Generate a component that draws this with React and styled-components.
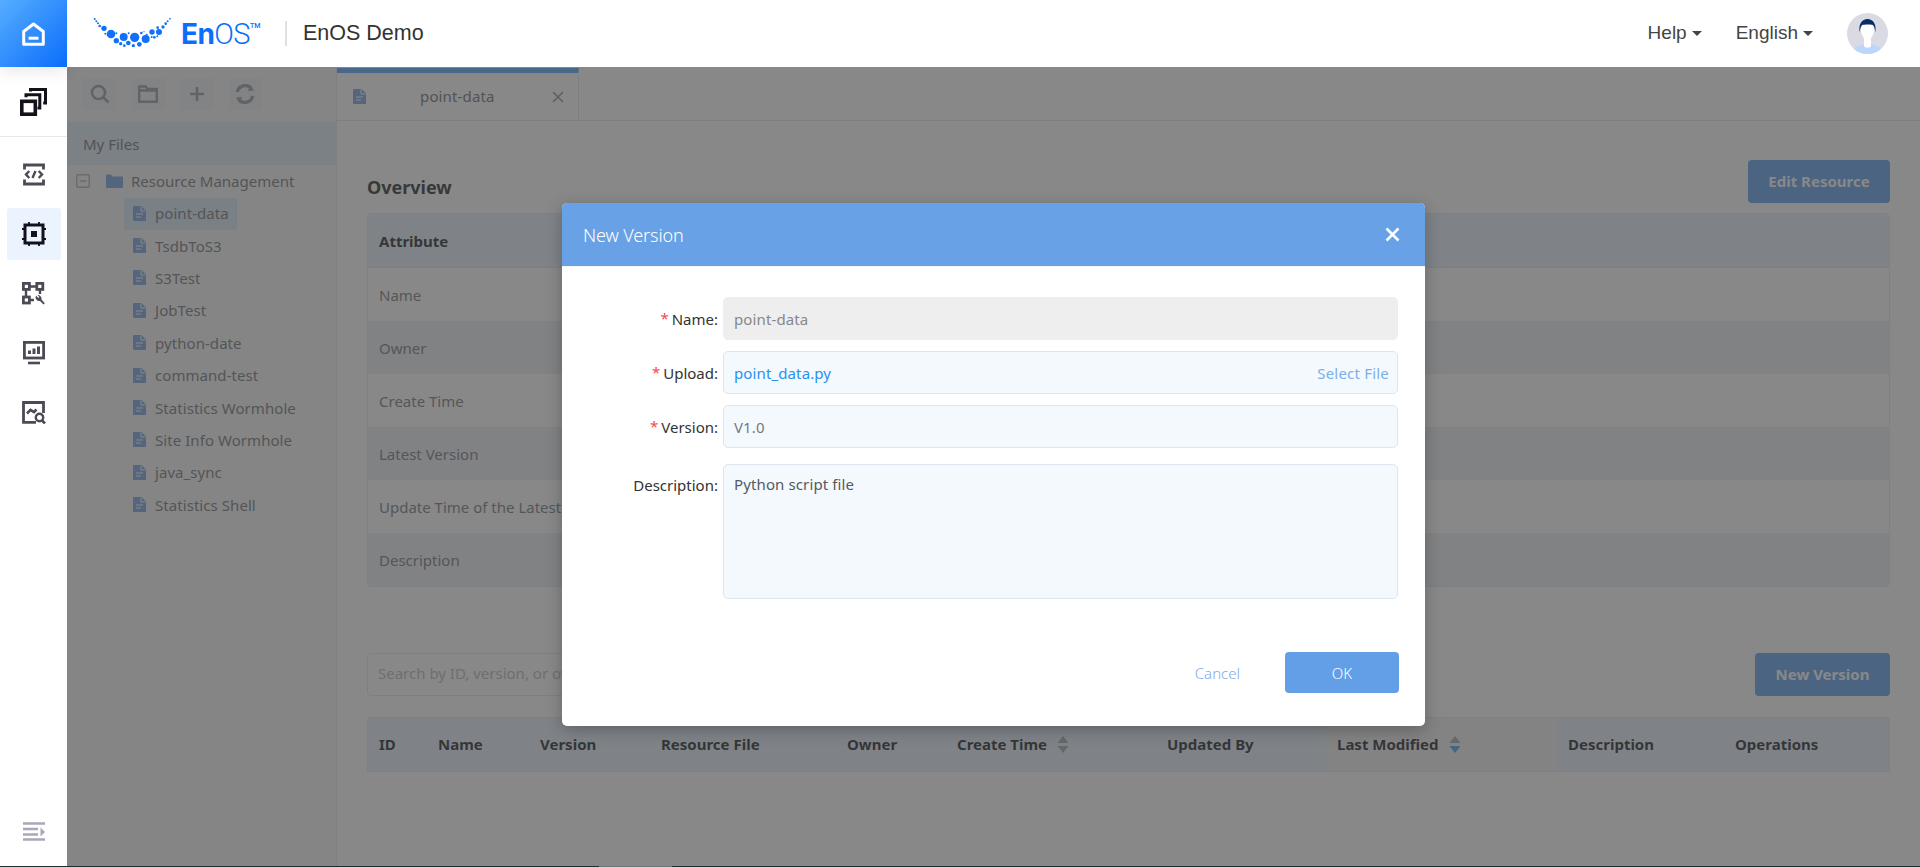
import React from 'react';
import styled, { createGlobalStyle } from 'styled-components';

const Global = createGlobalStyle`
  html, body { margin: 0; padding: 0; height: 100%; background: #fff; overflow: hidden; }
  #root { height: 100%; }
  * { box-sizing: border-box; }
  body { font-family: "Noto Sans", "Open Sans", sans-serif; }
`;

const Root = styled.div`display: flex; height: 867px; width: 1920px; position: relative; border-bottom: 1px solid #1e2d33;`;
const BottomMark = styled.i`position: absolute; left: 599px; bottom: -1px; width: 73px; height: 1px; background: #6d777b; z-index: 4;`;
const Sidebar = styled.aside`width: 67px; flex: none; display: flex; flex-direction: column; align-items: center; background: #fff; position: relative; z-index: 3;`;
const HomeBlock = styled.div`width: 67px; height: 67px; flex: none; display: flex; align-items: center; justify-content: center; background: linear-gradient(135deg, #56adff 0%, #0a6dfa 100%); box-shadow: 0 6px 14px rgba(0,0,0,.08);`;
const LayerItem = styled.div`width: 67px; height: 70px; flex: none; display: flex; align-items: center; justify-content: center; border-bottom: 1px solid #e8e8e8;`;
const NavList = styled.nav`display: flex; flex-direction: column; align-items: center; gap: 7.4px; padding-top: 11.5px; flex: 1;`;
const NavItem = styled.div`width: 54px; height: 52px; display: flex; align-items: center; justify-content: center; border-radius: 3px; background: ${p => p.$active ? '#ebf3ff' : 'transparent'};`;
const CollapseItem = styled.div`height: 70px; display: flex; align-items: center; justify-content: center;`;

const Main = styled.div`flex: 1; min-width: 0; display: flex; flex-direction: column;`;
const Header = styled.header`height: 67px; flex: none; display: flex; align-items: center; background: #fff; padding: 0 32px 0 26px; position: relative; z-index: 3; font-family: "Liberation Sans", Arial, sans-serif;`;
const LogoMark = styled.svg`width: 79px; height: 30px; flex: none; margin-top: -3px;`;
const LogoWord = styled.div`margin-left: 9px; width: 104px; color: #0b6ffb; font-family: Roboto, sans-serif; font-size: 29px; line-height: 30px; letter-spacing: -.6px; font-weight: 300;`;
const LogoBold = styled.span`font-weight: 700; font-family: Inter, Roboto, sans-serif; font-size: 28px;`;
const LogoTm = styled.sup`font-size: 7px; font-weight: 500; vertical-align: 16px; line-height: 0; letter-spacing: 0;`;
const LogoDivider = styled.div`width: 2px; height: 25px; background: #e0e0e0;`;
const AppName = styled.div`margin-left: 16px; font-size: 21.5px; color: #333;`;
const HeaderRight = styled.div`margin-left: auto; display: flex; align-items: center; gap: 34px;`;
const Menu = styled.div`display: flex; align-items: center; gap: 5px; font-size: 19px; color: #444; padding-bottom: 2px;`;
const Caret = styled.i`width: 0; height: 0; border: 5.5px solid transparent; border-top: 5.5px solid #444; border-bottom: 0; display: block; margin-top: 2px;`;
const Avatar = styled.svg`width: 41px; height: 41px; display: block;`;

const Content = styled.div`flex: 1; min-height: 0; display: flex; position: relative; background: #fff;`;
const Tree = styled.section`width: 270px; flex: none; background: #f5f6f8; border-right: 1px solid #e3e6ea; display: flex; flex-direction: column;`;
const ToolBar = styled.div`display: flex; gap: 15.6px; padding: 11px 0 0 16px; height: 55px;`;
const ToolBtn = styled.div`width: 33px; height: 32px; background: #ecf1f6; border-radius: 2px; display: flex; align-items: center; justify-content: center;`;
const MyFiles = styled.div`height: 43px; display: flex; align-items: center; padding-left: 16px; background: #dceaf8; font-size: 15px; color: #666c72;`;
const RootNode = styled.div`display: flex; align-items: center; height: 33px; padding: 0 0 2px 9px; font-size: 15px; color: #6c7074;`;
const FolderSvg = styled.svg`margin: 0 8px 0 16px; display: block;`;
const FileList = styled.ul`list-style: none; margin: 0; padding: 0 0 0 57px; display: flex; flex-direction: column;`;
const FileRow = styled.li`display: flex; align-items: center; gap: 9px; height: 32.4px; padding: 0 0 2px 9px; width: ${p => p.$active ? '113px' : 'auto'}; border-radius: 2px; font-size: 15px; letter-spacing: .06px; color: #6c7074; background: ${p => p.$active ? '#d5e7f8' : 'transparent'};`;

const Work = styled.section`flex: 1; min-width: 0; display: flex; flex-direction: column;`;
const TabBar = styled.div`height: 54px; flex: none; border-bottom: 1px solid #dfe3e8; display: flex; padding-top: 1px;`;
const Tab = styled.div`width: 242px; border-top: 5px solid #4fa3ff; border-right: 1px solid #dfe3e8; display: flex; align-items: center; padding: 0 14px 0 16px; font-size: 15px; letter-spacing: .15px; color: #666a70;`;
const TabLabel = styled.span`margin-left: 54px; flex: 1; padding-bottom: 1px;`;
const TabClose = styled.svg`display: block;`;
const Body = styled.div`flex: 1; padding: 39px 30px 0; display: flex; flex-direction: column;`;
const SectionHead = styled.div`height: 43px; display: flex; align-items: center; justify-content: space-between; margin-bottom: 10px;`;
const SectionTitle = styled.h2`margin: 10px 0 0; font-size: 18px; font-weight: 700; color: #1b1f24;`;
const PrimaryBtn = styled.button`height: 43px; width: ${p => p.$w}px; padding: 0 0 2px; border: 0; border-radius: 4px; background: #549aeb; color: #fff; font: 700 15px "Noto Sans", sans-serif;`;
const InfoTable = styled.div`border: 1px solid #e6e9ee; border-radius: 4px; overflow: hidden;`;
const InfoHead = styled.div`height: 54px; display: flex; align-items: center; padding-left: 11px; background: #e6f1fb; font-size: 15px; font-weight: 700; color: #16191d; border-bottom: 1px solid #dde3ea;`;
const InfoRow = styled.div`height: 53px; display: flex; align-items: center; padding-left: 11px; font-size: 15px; color: #6f7378; background: ${p => p.$alt ? '#eceef4' : '#fff'}; white-space: nowrap;`;
const SearchRow = styled.div`height: 43px; margin-top: 66px; display: flex; justify-content: space-between;`;
const SearchBox = styled.div`width: 420px; height: 43px; border: 1px solid #dfe6ee; border-radius: 4px; display: flex; align-items: center; padding: 0 0 3px 10px; font-size: 15px; color: #b3b7bc; background: #fff;`;
const ListHead = styled.div`margin-top: 21px; height: 55px; display: grid; grid-template-columns: 59px 102px 121px 186px 110px 210px 170px 231px 167px 1fr; border: 1px solid #dfe5ec; border-radius: 4px 4px 0 0; background: #e6f1fb; font-size: 15px; font-weight: 700; color: #16191d; overflow: hidden;`;
const ListCell = styled.div`display: flex; align-items: center; padding: 0 0 2px 11px; gap: 10px; background: ${p => p.$sorted ? '#f0f0f2' : 'transparent'};`;
const SortIcon = styled.svg`display: block; margin-top: 2px;`;

const Overlay = styled.div`position: absolute; inset: 0; z-index: 2; background: rgba(70,70,70,.643); display: flex; justify-content: center; align-items: flex-start; padding-top: 136px;`;
const Modal = styled.div`width: 863px; height: 523px; background: #fff; border-radius: 5px; overflow: hidden; display: flex; flex-direction: column; box-shadow: 0 4px 16px rgba(0,0,0,.25);`;
const ModalHead = styled.div`height: 64px; flex: none; background: #68a1e5; display: flex; align-items: center; justify-content: space-between; padding: 0 25px 0 21px; color: #fff; font-size: 18px; font-weight: 300; letter-spacing: -.1px; border-bottom: 1px solid #f2f6fc;`;
const CloseIcon = styled.svg`display: block;`;
const Form = styled.div`padding: 30px 27px 0 0; display: grid; grid-template-columns: 156px 675px; column-gap: 5px; grid-template-rows: 43px 43px 43px 135px; row-gap: 11px;`;
const Label = styled.div`display: flex; align-items: ${p => p.$top ? 'flex-start' : 'center'}; justify-content: flex-end; font-size: 15px; color: #333; gap: 3px; padding-top: ${p => p.$top ? '11px' : '0'}; margin-top: ${p => p.$top ? '5px' : '0'};`;
const Req = styled.span`color: #f5484f; font-size: 15px; line-height: 1; margin-top: -1px;`;
const Field = styled.div`display: flex; align-items: center; justify-content: space-between; padding: ${p => p.$link ? '1px' : '0'} 8px 0 ${p => p.$pl || 10}px; border-radius: 5px; font-size: 15px; letter-spacing: .12px; background: ${p => p.$disabled ? '#eeeeee' : '#f4f9fe'}; border: 1px solid ${p => p.$disabled ? '#eeeeee' : '#dde5f1'}; color: ${p => p.$disabled ? '#85888c' : p.$link ? '#2a90f0' : '#75797e'};`;
const Area = styled(Field)`align-items: flex-start; padding-top: 9px; margin-top: 5px; margin-bottom: -5px; color: #555a60;`;
const SelectFile = styled.span`color: #7eaeea; letter-spacing: .2px;`;
const Footer = styled.div`margin-top: auto; padding: 0 26px 33px 0; display: flex; justify-content: flex-end; align-items: center;`;
const CancelBtn = styled.span`color: #7ea9e6; font-size: 15px; font-weight: 300; margin-right: 45px;`;
const OkBtn = styled.button`width: 114px; height: 41px; border: 0; border-radius: 4px; background: #629fe6; color: #fff; font: 300 15px "Noto Sans", sans-serif;`;

const dots = [[333,108,13],[371,117,12],[404,118,14],[437,123,12],[477,102,9],[456,102,8],[312,91,8],[349,128,8],[418,139,7],[385,135,7],[400,143,5],[362,137,5],[373,143,4],[299,84,4],[294,76,3],[284,63,3],[289,70,3],[489,87,5],[497,77,4],[503,70,3],[510,62,2.5],[473,89,4],[463,118,4],[472,115,3],[316,107,3],[349,106,3],[386,106,3],[424,105,4],[440,110,3],[455,117,3],[432,101,2]];

const FileIcon = () => (
  <svg width="13" height="15" viewBox="0 0 13 15"><path d="M1 0h7.500L13 4.500V15H1a1 1 0 0 1-1-1V1a1 1 0 0 1 1-1z" fill="#6f9ee0"/><path d="M8 .5V5h4.500" fill="none" stroke="#fff" strokeWidth="1"/><path d="M3 8h7M3 11h5" stroke="#fff" strokeWidth="1.200"/></svg>
);
const IconSvg = ({ children, w = 24, h = 24 }) => <svg width={w} height={h} viewBox={`0 0 ${w} ${h}`} fill="none" style={{ display: 'block' }}>{children}</svg>;
const Sort = ({ active }) => (
  <SortIcon width="12" height="19" viewBox="0 0 12 19"><path d="M6 1l5.500 7H.5z" fill="#9ea3a8"/><path d="M6 18L.5 11h11z" fill={active ? '#3f9bf2' : '#9ea3a8'}/></SortIcon>
);

const files = ['point-data','TsdbToS3','S3Test','JobTest','python-date','command-test','Statistics Wormhole','Site Info Wormhole','java_sync','Statistics Shell'];
const info = ['Name','Owner','Create Time','Latest Version','Update Time of the Latest Version','Description'];
const ink = '#4a4b55';
const black = '#12121a';
const soft = '#a9a8b9';
const tool = '#94989c';

export default function App() {
  return (
    <Root>
      <Global />
      <BottomMark />
      <Sidebar>
        <HomeBlock>
          <IconSvg w={23} h={24}><path d="M1.700 9.500 11.500 2l9.800 7.500v12.800H1.700z" stroke="#fff" strokeWidth="3" strokeLinejoin="round"/><path d="M6.500 16.200h10" stroke="#fff" strokeWidth="3"/></IconSvg>
        </HomeBlock>
        <LayerItem>
          <IconSvg w={27} h={28}><rect x="1.800" y="13.300" width="13.500" height="12.900" stroke={black} strokeWidth="3.600"/><path d="M6 9.200V6.800h13.800V20h-2.300" stroke={black} strokeWidth="3"/><path d="M10.500 3.500V1.500H25.500V15h-2.300" stroke={black} strokeWidth="3"/></IconSvg>
        </LayerItem>
        <NavList>
          <NavItem>
            <IconSvg w={22} h={23}><path d="M1.500 6.500V2h19v4.500M1.500 16.500V21h19v-4.500" stroke={ink} strokeWidth="2.800"/><path d="M6.300 8 3 11.500 6.300 15M15.700 8 19 11.500 15.700 15M12.500 8l-3 7" stroke={ink} strokeWidth="2.400"/></IconSvg>
          </NavItem>
          <NavItem $active>
            <IconSvg w={24} h={24}><rect x="3" y="3" width="18" height="18" stroke={black} strokeWidth="3"/><rect x="9" y="9" width="6" height="6" fill={black}/><path d="M7 0v3M17 0v3M7 21v3M17 21v3M0 7h3M0 17h3M21 7h3M21 17h3" stroke={black} strokeWidth="1.800"/></IconSvg>
          </NavItem>
          <NavItem>
            <IconSvg w={23} h={23}><rect x="1.400" y="1.400" width="6" height="6" stroke={ink} strokeWidth="2.800"/><rect x="14.800" y="1.400" width="6" height="6" stroke={ink} strokeWidth="2.800"/><rect x="1.400" y="15" width="6" height="6" stroke={ink} strokeWidth="2.800"/><path d="M7 4.500h8M4 7v8M7 18h5M18 7v5" stroke={ink} strokeWidth="2.400"/><path d="M14 13.500a3.800 3.800 0 0 0 4 5.500l3.500 3.500 1.300-1.300-3.300-3.600a3.800 3.800 0 0 0-4-4.500l1.800 2-1 1z" fill={ink}/></IconSvg>
          </NavItem>
          <NavItem>
            <IconSvg w={22} h={24}><rect x="1.400" y="1.400" width="19.200" height="15.600" stroke={ink} strokeWidth="2.800"/><path d="M5 22h12" stroke={ink} strokeWidth="2.600"/><path d="M6.500 9.500v3.500M11 7.500v5.500M15.500 5.500v7.500" stroke={ink} strokeWidth="3"/></IconSvg>
          </NavItem>
          <NavItem>
            <IconSvg w={24} h={23}><path d="M14 21.400H1.500V1.500h20V12" stroke={ink} strokeWidth="2.800"/><path d="M5 12.500l3.500-3.700L12 11l2.500-2.500" stroke={ink} strokeWidth="2.600"/><circle cx="17.500" cy="16.500" r="3.700" stroke={ink} strokeWidth="2.400"/><path d="M20 19.500l3 3" stroke={ink} strokeWidth="2.600"/></IconSvg>
          </NavItem>
        </NavList>
        <CollapseItem>
          <IconSvg w={22} h={19}><path d="M0 1.500h22M0 7h15M0 12.500h15M0 17.500h22" stroke={soft} strokeWidth="2.600"/><path d="M17.500 5.500v9l4.500-4.500z" fill={soft}/></IconSvg>
        </CollapseItem>
      </Sidebar>
      <Main>
        <Header>
          <LogoMark viewBox="279 57 237 90">
            {dots.map(([x, y, r]) => <circle key={`${x}-${y}`} cx={x} cy={y} r={r} fill="#1170fb" />)}
          </LogoMark>
          <LogoWord><LogoBold>En</LogoBold>OS<LogoTm>TM</LogoTm></LogoWord>
          <LogoDivider />
          <AppName>EnOS Demo</AppName>
          <HeaderRight>
            <Menu>Help<Caret /></Menu>
            <Menu>English<Caret /></Menu>
            <Avatar viewBox="0 0 41 41">
              <defs><clipPath id="av"><circle cx="20.500" cy="20.500" r="20.500" /></clipPath></defs>
              <g clipPath="url(#av)">
                <rect width="41" height="41" fill="#d9dae4" />
                <path d="M5 41c1-7 8-10 15.500-10S35 34 36 41z" fill="#bcd6fb" />
                <path d="M17 24h7v9c0 2-7 2-7 0z" fill="#fff" />
                <path d="M13.500 14c0-4 3-7 7-7s7 3 7 7c0 6-3 13-7 13s-7-7-7-13z" fill="#fff" />
                <path d="M12.800 19.500c-1.800-8.500 2.500-13.500 7.700-13.500s9.500 5 7.700 13.500c-.2-3-.8-6-2.300-7.500-2.700-.8-8.100-.8-10.800 0-1.500 1.500-2.100 4.500-2.300 7.500z" fill="#0b2a66" />
              </g>
            </Avatar>
          </HeaderRight>
        </Header>
        <Content>
          <Tree>
            <ToolBar>
              <ToolBtn><IconSvg w={20} h={20}><circle cx="8.500" cy="8.500" r="6.500" stroke={tool} strokeWidth="2.600"/><path d="M13.500 13.500l5 5" stroke={tool} strokeWidth="2.600"/></IconSvg></ToolBtn>
              <ToolBtn><IconSvg w={20} h={18}><path d="M1.200 16.800V1.500h6.500l1.800 2.500h9.300v12.800z" stroke={tool} strokeWidth="2.400"/><path d="M1 5.500h18" stroke={tool} strokeWidth="2.600"/></IconSvg></ToolBtn>
              <ToolBtn><IconSvg w={16} h={16}><path d="M8 1v14M1 8h14" stroke={tool} strokeWidth="2.600"/></IconSvg></ToolBtn>
              <ToolBtn><IconSvg w={20} h={20}><path d="M2.300 8a8 8 0 0 1 14-3.500M17.700 12a8 8 0 0 1-14 3.500" stroke={tool} strokeWidth="3.400"/><path d="M15.500 1l3.500 5.500-6 .5zM4.500 19 1 13.500l6-.5z" fill={tool}/></IconSvg></ToolBtn>
            </ToolBar>
            <MyFiles>My Files</MyFiles>
            <RootNode>
              <IconSvg w={14} h={14}><rect x=".7" y=".7" width="12.600" height="12.600" rx="1.500" stroke="#a9adb1" strokeWidth="1.400"/><path d="M3.500 7h7" stroke="#a9adb1" strokeWidth="1.400"/></IconSvg>
              <FolderSvg width="17" height="14" viewBox="0 0 17 14"><path d="M0 1.500A1 1 0 0 1 1 .5h4l1.500 2H16a1 1 0 0 1 1 1V13a1 1 0 0 1-1 1H1a1 1 0 0 1-1-1z" fill="#6f9ee0"/></FolderSvg>
              Resource Management
            </RootNode>
            <FileList>
              {files.map((f, i) => <FileRow key={f} $active={i === 0}><FileIcon />{f}</FileRow>)}
            </FileList>
          </Tree>
          <Work>
            <TabBar>
              <Tab>
                <FileIcon />
                <TabLabel>point-data</TabLabel>
                <TabClose width="12" height="12" viewBox="0 0 12 12"><path d="M1 1l10 10M11 1L1 11" stroke="#8d9095" strokeWidth="1.600"/></TabClose>
              </Tab>
            </TabBar>
            <Body>
              <SectionHead>
                <SectionTitle>Overview</SectionTitle>
                <PrimaryBtn $w={142}>Edit Resource</PrimaryBtn>
              </SectionHead>
              <InfoTable>
                <InfoHead>Attribute</InfoHead>
                {info.map((t, i) => <InfoRow key={t} $alt={i % 2 === 1}>{t}</InfoRow>)}
              </InfoTable>
              <SearchRow>
                <SearchBox>Search by ID, version, or owner</SearchBox>
                <PrimaryBtn $w={135}>New Version</PrimaryBtn>
              </SearchRow>
              <ListHead>
                <ListCell>ID</ListCell>
                <ListCell>Name</ListCell>
                <ListCell>Version</ListCell>
                <ListCell>Resource File</ListCell>
                <ListCell>Owner</ListCell>
                <ListCell>Create Time <Sort /></ListCell>
                <ListCell>Updated By</ListCell>
                <ListCell $sorted>Last Modified <Sort active /></ListCell>
                <ListCell>Description</ListCell>
                <ListCell>Operations</ListCell>
              </ListHead>
            </Body>
          </Work>
          <Overlay>
            <Modal>
              <ModalHead>
                New Version
                <CloseIcon width="15" height="15" viewBox="0 0 15 15"><path d="M1.500 1.500l12 12M13.500 1.500l-12 12" stroke="#fff" strokeWidth="2.600"/></CloseIcon>
              </ModalHead>
              <Form>
                <Label><Req>*</Req>Name:</Label>
                <Field $disabled>point-data</Field>
                <Label><Req>*</Req>Upload:</Label>
                <Field $link>point_data.py<SelectFile>Select File</SelectFile></Field>
                <Label><Req>*</Req>Version:</Label>
                <Field>V1.0</Field>
                <Label $top>Description:</Label>
                <Area>Python script file</Area>
              </Form>
              <Footer>
                <CancelBtn>Cancel</CancelBtn>
                <OkBtn>OK</OkBtn>
              </Footer>
            </Modal>
          </Overlay>
        </Content>
      </Main>
    </Root>
  );
}
